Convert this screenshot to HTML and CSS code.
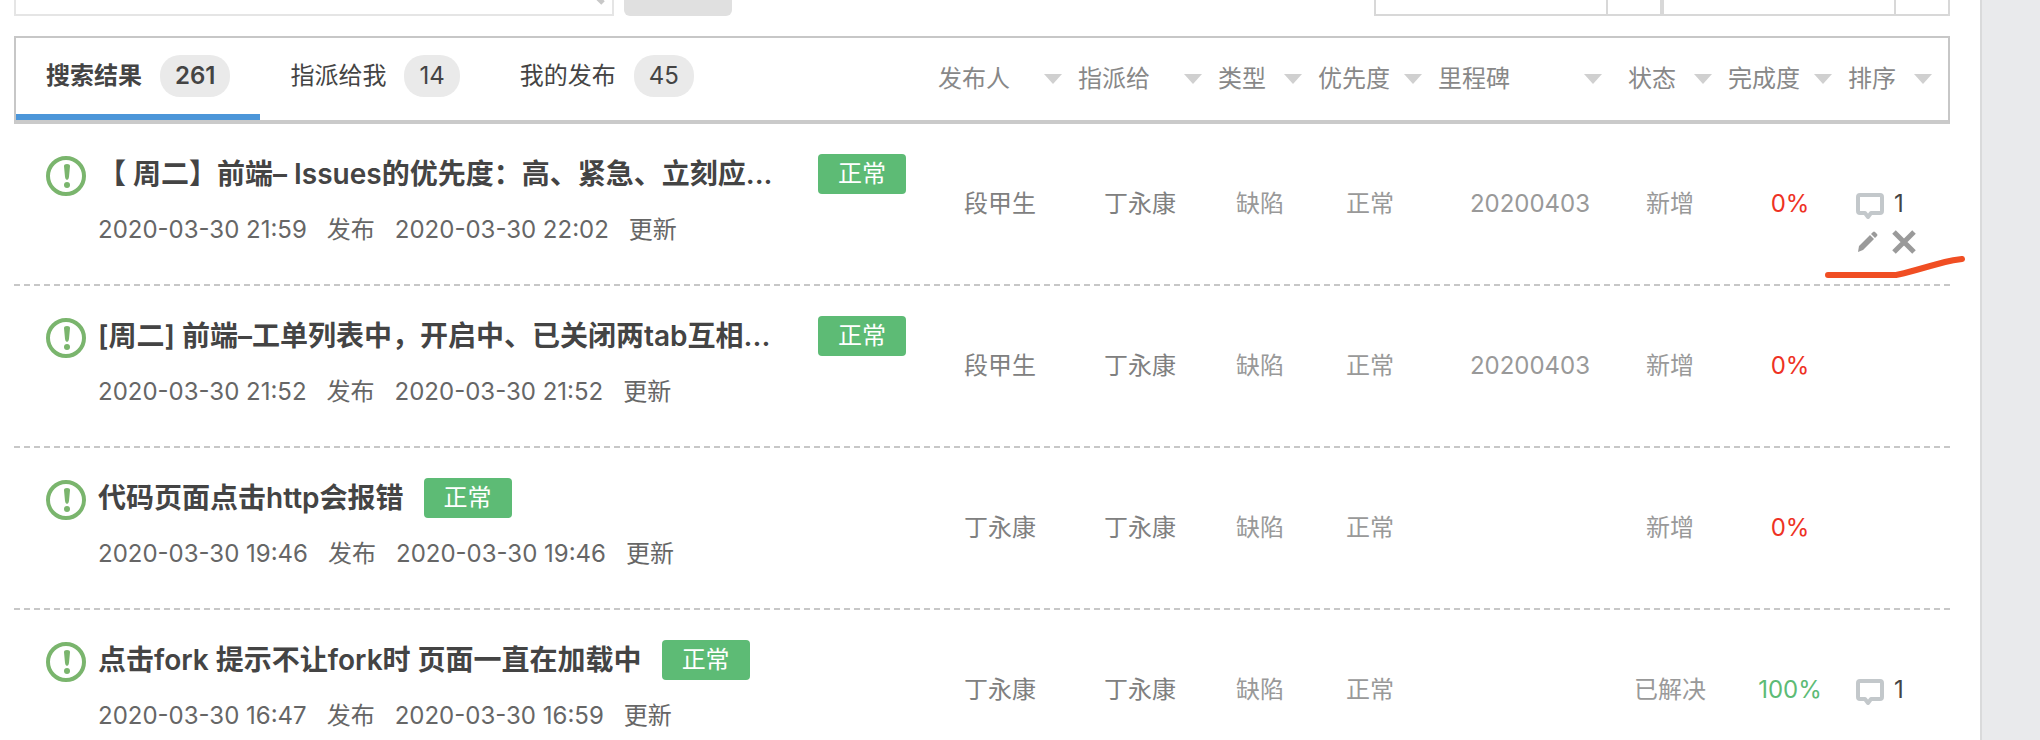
FILE: index.html
```
<!DOCTYPE html>
<html lang="zh-CN">
<head>
    <meta charset="UTF-8">
    <meta name="viewport" content="width=device-width, initial-scale=1.0">
    <title>Issues</title>
    <link rel="stylesheet" href="styles.css">
</head>
<body>
    <svg class="sprite" aria-hidden="true">
        <symbol id="icon-issue" viewBox="0 0 40 40">
            <circle cx="20" cy="20" r="18" fill="none" stroke="#7ab56d" stroke-width="4"/>
            <path d="M18 10q0-2 3-2t3 2l-1 11q-.4 3-2 3t-2-3z" fill="#7ab56d"/>
            <circle cx="21" cy="29" r="3" fill="#7ab56d"/>
        </symbol>
        <symbol id="icon-comment" viewBox="0 0 28 26">
            <path d="M4 2h20q2 0 2 2v14q0 2-2 2h-9l-3 4-3-4H4q-2 0-2-2V4q0-2 2-2z" fill="none" stroke="#c3c8cb" stroke-width="4" stroke-linejoin="round"/>
        </symbol>
        <symbol id="icon-edit" viewBox="0 0 22 22">
            <path d="M14 4l4 4L7 19l-5 2 1-6zM15 3l2-2q1-1 2 0l2 2q1 1 0 2l-2 2z" fill="#9a9a9a"/>
        </symbol>
        <symbol id="icon-close" viewBox="0 0 24 24">
            <path d="M2 2l20 20M22 2L2 22" stroke="#9a9a9a" stroke-width="5" fill="none"/>
        </symbol>
    </svg>

    <div class="page">
        <form class="filters">
            <div class="search-box">
                <input type="text" aria-label="搜索">
                <svg class="search-icon" viewBox="0 0 30 30"><circle cx="12" cy="12" r="9" fill="none" stroke="#c8c8c8" stroke-width="4"/><path d="M19 19l8 8" stroke="#c8c8c8" stroke-width="5"/></svg>
            </div>
            <button type="button" class="search-btn" aria-label="搜索"></button>
            <div class="selects">
                <select aria-label="类型"></select>
                <select aria-label="状态"></select>
            </div>
        </form>

        <table class="issues">
            <colgroup>
                <col>
                <col class="col-user">
                <col class="col-user">
                <col class="col-type">
                <col class="col-priority">
                <col class="col-milestone">
                <col class="col-status">
                <col class="col-done">
                <col class="col-sort">
            </colgroup>
            <thead>
                <tr>
                    <th class="tabs-cell">
                        <nav class="tabs">
                            <a href="#" class="active">搜索结果<span class="count">261</span></a>
                            <a href="#">指派给我<span class="count">14</span></a>
                            <a href="#">我的发布<span class="count">45</span></a>
                        </nav>
                    </th>
                    <th><button class="sort">发布人</button></th>
                    <th><button class="sort">指派给</button></th>
                    <th><button class="sort">类型</button></th>
                    <th><button class="sort">优先度</button></th>
                    <th class="wide"><button class="sort">里程碑</button></th>
                    <th><button class="sort">状态</button></th>
                    <th><button class="sort">完成度</button></th>
                    <th class="wide"><button class="sort">排序</button></th>
                </tr>
            </thead>
            <tbody>
                <tr>
                    <td class="issue">
                        <div class="issue-body">
                            <svg class="issue-icon"><use href="#icon-issue"/></svg>
                            <div>
                                <div class="title-line"><a href="#" class="title long">【 周二】前端– Issues的优先度：高、紧急、立刻应...</a><span class="tag">正常</span></div>
                                <div class="dates"><span>2020-03-30 21:59</span><span>发布</span><span>2020-03-30 22:02</span><span>更新</span></div>
                            </div>
                        </div>
                    </td>
                    <td class="user">段甲生</td>
                    <td class="user">丁永康</td>
                    <td>缺陷</td>
                    <td>正常</td>
                    <td class="milestone">20200403</td>
                    <td>新增</td>
                    <td class="done">0%</td>
                    <td class="actions">
                        <a href="#" class="comments"><svg><use href="#icon-comment"/></svg>1</a>
                        <div class="tools">
                            <button aria-label="编辑"><svg class="edit"><use href="#icon-edit"/></svg></button>
                            <button aria-label="删除"><svg class="close"><use href="#icon-close"/></svg></button>
                        </div>
                        <svg class="marker" viewBox="0 0 140 22"><path d="M3 19h68q6-1 20-5t29-8q8-2 17-3"/></svg>
                    </td>
                </tr>
                <tr>
                    <td class="issue">
                        <div class="issue-body">
                            <svg class="issue-icon"><use href="#icon-issue"/></svg>
                            <div>
                                <div class="title-line"><a href="#" class="title long">[周二] 前端–工单列表中，开启中、已关闭两tab互相...</a><span class="tag">正常</span></div>
                                <div class="dates"><span>2020-03-30 21:52</span><span>发布</span><span>2020-03-30 21:52</span><span>更新</span></div>
                            </div>
                        </div>
                    </td>
                    <td class="user">段甲生</td>
                    <td class="user">丁永康</td>
                    <td>缺陷</td>
                    <td>正常</td>
                    <td class="milestone">20200403</td>
                    <td>新增</td>
                    <td class="done">0%</td>
                    <td></td>
                </tr>
                <tr>
                    <td class="issue">
                        <div class="issue-body">
                            <svg class="issue-icon"><use href="#icon-issue"/></svg>
                            <div>
                                <div class="title-line"><a href="#" class="title">代码页面点击http会报错</a><span class="tag">正常</span></div>
                                <div class="dates"><span>2020-03-30 19:46</span><span>发布</span><span>2020-03-30 19:46</span><span>更新</span></div>
                            </div>
                        </div>
                    </td>
                    <td class="user">丁永康</td>
                    <td class="user">丁永康</td>
                    <td>缺陷</td>
                    <td>正常</td>
                    <td></td>
                    <td>新增</td>
                    <td class="done">0%</td>
                    <td></td>
                </tr>
                <tr>
                    <td class="issue">
                        <div class="issue-body">
                            <svg class="issue-icon"><use href="#icon-issue"/></svg>
                            <div>
                                <div class="title-line"><a href="#" class="title">点击fork 提示不让fork时 页面一直在加载中</a><span class="tag">正常</span></div>
                                <div class="dates"><span>2020-03-30 16:47</span><span>发布</span><span>2020-03-30 16:59</span><span>更新</span></div>
                            </div>
                        </div>
                    </td>
                    <td class="user">丁永康</td>
                    <td class="user">丁永康</td>
                    <td>缺陷</td>
                    <td>正常</td>
                    <td></td>
                    <td>已解决</td>
                    <td class="done finished">100%</td>
                    <td class="actions">
                        <a href="#" class="comments"><svg><use href="#icon-comment"/></svg>1</a>
                    </td>
                </tr>
            </tbody>
        </table>
    </div>
</body>
</html>
```
FILE: styles.css
```
* {
    box-sizing: border-box;
}
body {
    margin: 0;
    height: 100vh;
    overflow: hidden;
    background: #e9eaec;
    font-family: Inter, "Noto Sans CJK SC", sans-serif;
    font-size: 24px;
    line-height: 32px;
    color: #444;
}
a {
    color: inherit;
    text-decoration: none;
}
button {
    padding: 0;
    border: none;
    background: none;
    font: inherit;
    color: inherit;
    cursor: pointer;
}
.sprite {
    display: none;
}
.page {
    min-height: 100vh;
    margin-right: 58px;
    padding: 0 30px 0 14px;
    background: #fff;
    border-right: 2px solid #d9dadb;
}

/* filter bar, scrolled under the top edge */
.filters {
    display: flex;
    align-items: flex-end;
    gap: 10px;
    height: 16px;
    margin-bottom: 20px;
    overflow: hidden;
}
.search-box {
    position: relative;
    width: 600px;
}
.search-box input {
    display: block;
    width: 100%;
    height: 60px;
    border: 2px solid #e5e5e5;
}
.search-icon {
    position: absolute;
    right: 8px;
    bottom: 8px;
    width: 30px;
    height: 30px;
}
.search-btn {
    width: 108px;
    height: 60px;
    border-radius: 6px;
    background: #e0e0e0;
}
.selects {
    display: flex;
    margin-left: auto;
}
.selects select {
    width: 288px;
    height: 60px;
    appearance: none;
    border: 2px solid #d8d8d8;
    border-radius: 0;
    background: linear-gradient(#d8d8d8, #d8d8d8) no-repeat right 52px top / 2px 100%;
}

/* issue list */
.issues {
    width: 100%;
    table-layout: fixed;
    border-spacing: 0;
}
.col-user {
    width: 140px;
}
.col-type,
.col-status {
    width: 100px;
}
.col-priority,
.col-done {
    width: 120px;
}
.col-milestone {
    width: 190px;
}
.col-sort {
    width: 110px;
}
.issues th {
    height: 88px;
    padding: 0 8px;
    border-top: 2px solid #c7c7c7;
    border-bottom: 4px solid #cacaca;
    font-weight: normal;
    text-align: left;
}
.issues th.tabs-cell {
    padding: 0;
    border-left: 2px solid #c7c7c7;
}
.issues th.wide {
    padding-right: 18px;
}
.issues th:last-child {
    padding-right: 16px;
    border-right: 2px solid #c7c7c7;
}
.tabs {
    display: flex;
}
.tabs a {
    display: flex;
    align-items: center;
    gap: 18px;
    height: 82px;
    padding: 0 30px;
    border-bottom: 6px solid transparent;
}
.tabs .active {
    border-color: #4c96d9;
    font-weight: 600;
}
.count {
    padding: 5px 15px;
    border-radius: 20px;
    background: #eaeaea;
}
.sort {
    display: flex;
    align-items: center;
    justify-content: space-between;
    width: 100%;
    color: #888;
}
.sort::after {
    content: "";
    border: 9px solid transparent;
    border-top: 10px solid #d0d0d0;
    border-bottom: none;
}
.issues tbody tr {
    background: repeating-linear-gradient(90deg, #c7c7c7 0 6px, transparent 6px 10px) no-repeat left bottom / 100% 2px;
}
.issues td {
    height: 162px;
    padding: 64px 0 0;
    vertical-align: top;
    text-align: center;
    color: #999;
}
.issues td.user {
    color: #808080;
}
.issues td.milestone {
    padding-left: 10px;
}
.issues td.done {
    padding-left: 20px;
    color: #ee3224;
}
.issues td.finished {
    color: #5dbb75;
}
.issues td.issue {
    padding: 30px 0 0 32px;
    text-align: left;
}
.issue-body {
    display: flex;
    gap: 12px;
}
.issue-icon {
    flex: none;
    width: 40px;
    height: 40px;
    margin-top: 2px;
}
.title-line {
    display: flex;
    gap: 20px;
    line-height: 40px;
}
.title {
    font-size: 28px;
    font-weight: 600;
    color: #444;
    white-space: nowrap;
}
.title.long {
    width: 700px;
    overflow: hidden;
    text-overflow: ellipsis;
}
.tag {
    padding: 0 20px;
    border-radius: 4px;
    background: #5dbb75;
    color: #fff;
    white-space: nowrap;
}
.dates {
    display: flex;
    gap: 20px;
    margin-top: 20px;
    color: #666;
}
.issues td.actions {
    position: relative;
    padding-left: 16px;
    text-align: left;
}
.comments {
    display: flex;
    align-items: center;
    gap: 10px;
    color: #444;
}
.comments svg {
    width: 28px;
    height: 26px;
    margin-top: 4px;
}
.tools {
    display: flex;
    gap: 14px;
    margin-top: 10px;
}
.tools button,
.tools svg {
    display: flex;
    align-items: center;
}
.edit {
    width: 22px;
    height: 22px;
}
.close {
    width: 24px;
    height: 24px;
}
.search-icon {
    bottom: 10px;
}
/* hand-drawn red underline over the tools */
.marker {
    position: absolute;
    left: -15px;
    bottom: 8px;
    width: 140px;
    height: 22px;
    fill: none;
    stroke: #f04e23;
    stroke-width: 6;
    stroke-linecap: round;
}
```
